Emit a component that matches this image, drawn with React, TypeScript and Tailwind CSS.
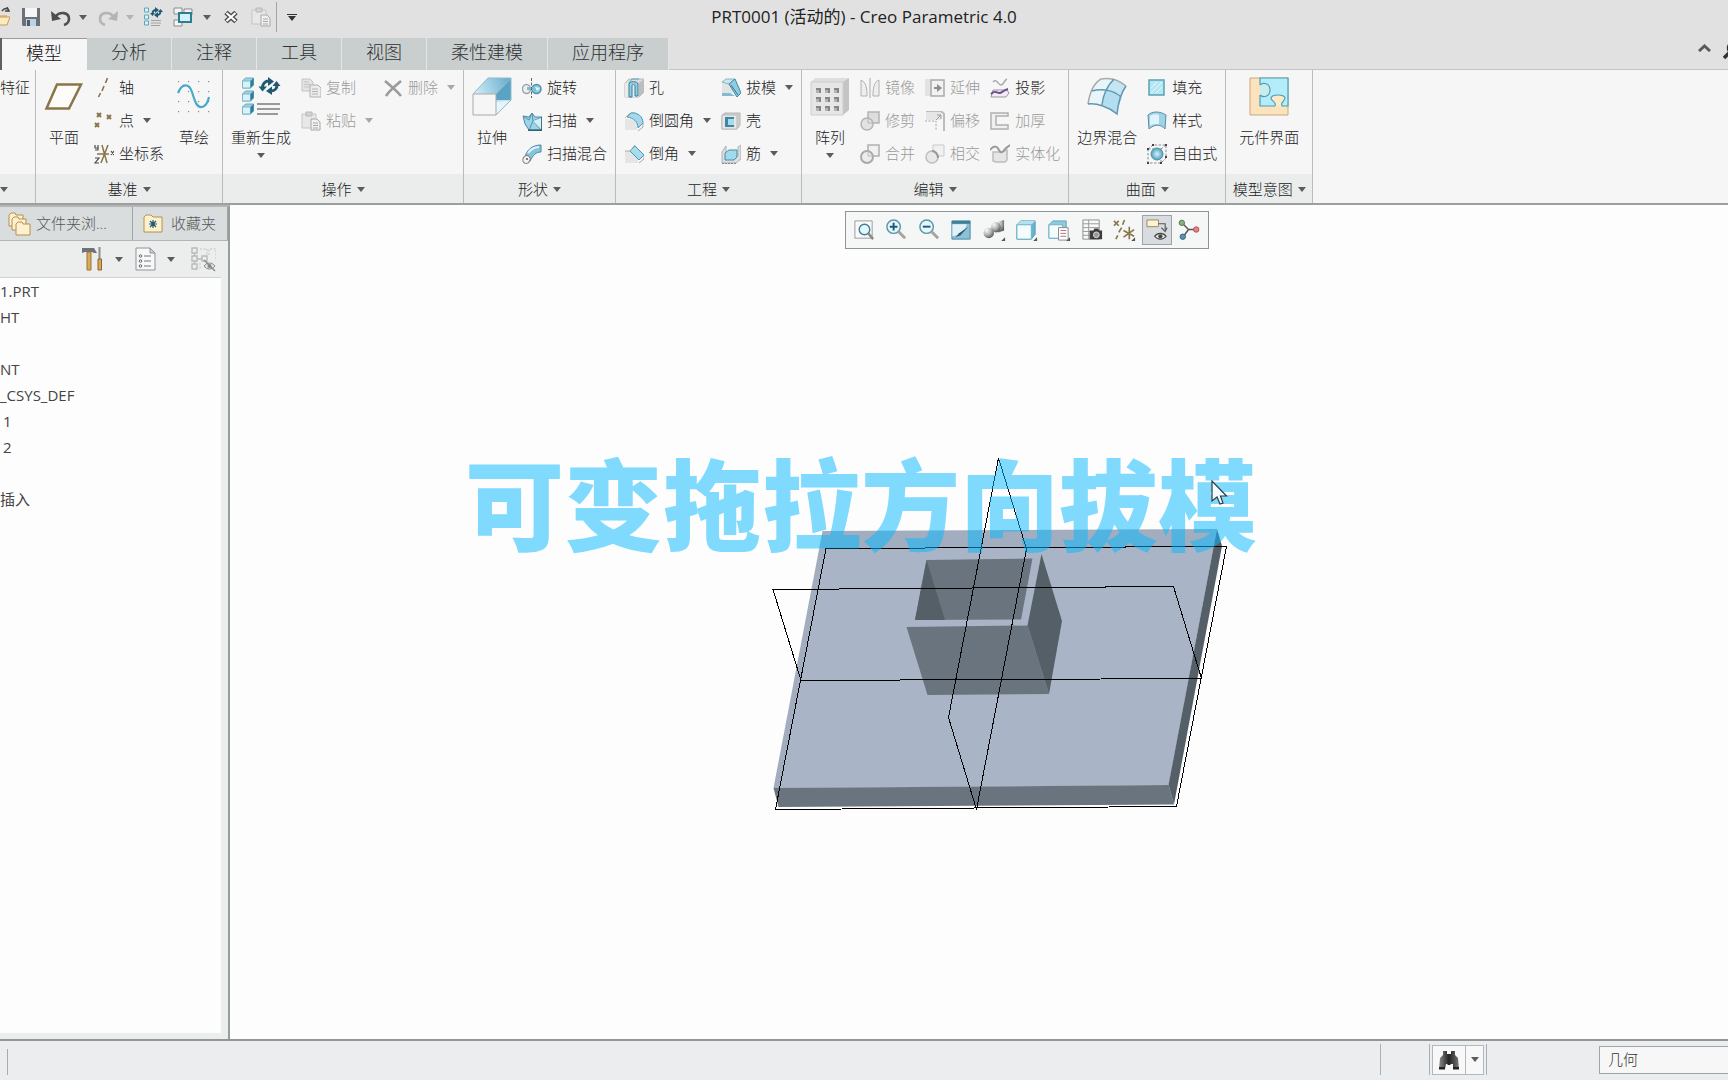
import type { ReactNode } from "react";

/* ---------- shared drawing helpers ---------- */

function Icon({ children, view = 20, className = "size-5" }: { children: ReactNode; view?: number; className?: string }) {
  return (
    <svg viewBox={`0 0 ${view} ${view}`} className={`${className} block shrink-0`} fill="none" aria-hidden="true">
      {children}
    </svg>
  );
}

function Caret({ tone = "fill-[#5c5c5c]" }: { tone?: string }) {
  return (
    <svg viewBox="0 0 8 5" className={`h-[5px] w-2 shrink-0 ${tone}`} aria-hidden="true">
      <path d="M0 0H8L4 5Z" />
    </svg>
  );
}

const TEAL = "#1f5a70";
const CYAN = "#4aa9c9";
const BROWN = "#8a7548";
const GREY = "#b9b9b9";

const cube = (x: number, y: number) => (
  <g key={`${x}-${y}`}>
    <path d={`M${x} ${y + 3}l3-3h8v7l-3 3h-8z`} fill="#9fd3e3" stroke="#6aa9bd" />
    <path d={`M${x} ${y + 3}h8v7h-8z`} fill="#d8f2f9" stroke="#7ab7c9" />
    <path d={`M${x + 8} ${y + 3}l3-3v7l-3 3z`} fill="#2e7f97" />
  </g>
);

/* ---------- large ribbon icons (40 units) ---------- */

const big: Record<string, ReactNode> = {
  plane: <path d="M13 7.500H37L25 31.500H2.500Z" stroke={BROWN} strokeWidth="2.500" fill="#fdfcf8" />,
  sketch: (
    <>
      {[4, 14, 24, 34].map((y) => [4, 14, 24, 34].map((x) => <rect key={`${x}-${y}`} x={x} y={y} width="1.200" height="1.200" fill="#8a8a8a" />))}
      <path d="M4 16C8 6 15 6 18 15C21 25 23 31 28 30C32 29 34 25 35 20" stroke={CYAN} strokeWidth="2.200" />
    </>
  ),
  regen: (
    <>
      {[1, 14, 27].map((y) => cube(1.5, y))}
      <path d="M16 27h23M16 32h23M16 37h21" stroke="#9a9a9a" strokeWidth="2" />
      <path d="M21.500 11C21.500 7 24 4 28 4" stroke={TEAL} strokeWidth="3" />
      <path d="M27 0L33 4.500L27 9Z" fill={TEAL} />
      <path d="M17.500 9.500H26L21.500 14.500Z" fill={TEAL} />
      <path d="M36 8C36 11 34 14 30 14" stroke={TEAL} strokeWidth="3" />
      <path d="M31 9.500L25 14L31 18Z" fill={TEAL} />
      <path d="M31.500 9H39.500L35.500 4Z" fill={TEAL} />
    </>
  ),
  extrude: (
    <>
      <path d="M1 17L16 1H39L24 17Z" fill="url(#exA)" />
      <path d="M39 1V23L24 38V17Z" fill="#bfe3f1" />
      <path d="M39 1V23H24V17Z" fill="#5ba3c4" />
      <path d="M24 38V25L37 24Z" fill="#e4f5fb" />
      <path d="M1 17H24V38H1Z" fill="#f6f6f6" stroke="#a9a9a9" />
      <path d="M1 17L16 1H39V23L24 38M24 17L39 1" stroke="#8fb9ca" />
      <defs>
        <linearGradient id="exA" x1="0" y1="17" x2="39" y2="0" gradientUnits="userSpaceOnUse">
          <stop stopColor="#d9f2fa" />
          <stop offset="1" stopColor="#5fa9ca" />
        </linearGradient>
      </defs>
    </>
  ),
  pattern: (
    <>
      <path d="M1 5L6 1H39V33L33 38H1Z" fill="#c4c4c4" />
      <path d="M1 5L6 1H39L33 5Z" fill="#dedede" />
      <path d="M1 5H33V38H1Z" fill="#e6e6e6" stroke="#cdcdcd" />
      {[11, 20, 29].map((y) =>
        [6, 15, 24].map((x) => (
          <g key={`${x}-${y}`}>
            <rect x={x} y={y} width="5" height="5" fill="#b3b3b3" />
            <path d={`M${x} ${y}h5v5h-2v-3h-3z`} fill="#858585" />
          </g>
        )),
      )}
    </>
  ),
  blend: (
    <>
      <path d="M1 27C3 14 7 6 14 2C24 0 32 3 39 9C34 16 31 27 30 37C22 30 10 26 1 27Z" fill="#e8f6fc" />
      <path d="M18 14C24 14 31 17 35 21C32 26 31 32 30 37C26 33 21 30 16 28C16 23 17 18 18 14Z" fill="#b3def2" />
      <path d="M27 2C32 3 36 6 39 9C37 12 35 16 34 20C30 17 25 14 19 14C21 9 24 5 27 2Z" fill="#c3e5f4" />
      <path d="M1 27C3 14 7 6 14 2C24 0 32 3 39 9" stroke="#aaa" strokeWidth="1.500" />
      <path d="M1 27C10 26 22 30 30 37C31 27 34 16 39 9M5 14C16 11 28 14 34 20M27 2C20 9 16 18 15 28" stroke="#5f98ae" strokeWidth="1.500" />
    </>
  ),
  puzzle: (
    <>
      <path d="M1 1H39V38H1Z" fill="#fbe3bd" stroke="#c9a878" />
      <path d="M11 1H39V29H11Z" fill="#b4ecfa" />
      <path d="M11 8C14 5 21 6 21 13C21 20 14 21 11 18" fill="#c9ecee" stroke="#4f9fb4" strokeWidth="1.200" />
      <path d="M26 29C28 25 22 24 22 21C23 17 35 17 36 21C36 24 31 25 33 29" fill="#fbe9c8" stroke="#4f9fb4" strokeWidth="1.200" />
      <path d="M11 8V1H39V29H33M26 29H11V18" stroke="#4f9fb4" strokeWidth="1.200" />
    </>
  ),
};

/* ---------- small ribbon icons (20 units) ---------- */

const sphere = (
  <radialGradient id="ball">
    <stop stopColor="#d9f3fb" />
    <stop offset="1" stopColor="#4f9fbb" />
  </radialGradient>
);

const small: Record<string, ReactNode> = {
  axis: <path d="M13.500 0L11.500 5M10 8L8 13M6.500 15L4.500 19" stroke={BROWN} strokeWidth="1.600" />,
  point: <path d="M3 2l4 4m0-4l-4 4M13 4l4 4m0-4l-4 4M1 12l4 4m0-4l-4 4" stroke={BROWN} strokeWidth="2" />,
  csys: (
    <>
      <path d="M8 1L13 19M14 1L7 19M3 10H15" stroke={BROWN} strokeWidth="1.500" />
      <path d="M1 1v3h3m0-3v5H1M17 7l3 4m0-4l-3 4M1 14h4l-4 5h4" stroke="#4a4a4a" strokeWidth="1.200" />
    </>
  ),
  copy: (
    <>
      <path d="M1 1h8l3 3v9H1z" fill="#e4e4e4" stroke="#c4c4c4" />
      <path d="M3 4h5M3 6.500h6M3 9h6" stroke="#c4c4c4" />
      <path d="M9 7h8l3 3v9H9z" fill="#ececec" stroke="#b0b0b0" />
      <path d="M11 11h6M11 13.500h6M11 16h6" stroke="#b4b4b4" />
    </>
  ),
  paste: (
    <>
      <path d="M1 3h14v14H1z" fill="#e8e8e8" stroke="#c6c6c6" />
      <path d="M5 1h6v4H5z" fill="#d3d3d3" stroke="#b8b8b8" />
      <path d="M10 8h6l3 3v8h-9z" fill="#f0f0f0" stroke="#a8a8a8" />
      <path d="M12 12h5M12 14.500h5M12 17h5" stroke="#a8a8a8" />
    </>
  ),
  remove: <path d="M2 3C8 8 14 13 18 18M18 3C12 8 6 13 3 18" stroke="#9b9b9b" strokeWidth="2.600" />,
  revolve: (
    <>
      <ellipse cx="4.500" cy="11" rx="4" ry="4.500" fill="#eee" stroke="#9ba9af" strokeWidth="1.500" />
      <ellipse cx="14.500" cy="11" rx="4.500" ry="4.500" fill="#8ccbe0" stroke="#4b92ab" strokeWidth="1.500" />
      <path d="M5 9l9 0v4l-9-1z" fill="#7dbdd3" />
      <path d="M13 9l5 1l-3 3z" fill="#e4f6fb" />
      <path d="M9.500 0v20" stroke="#666" strokeDasharray="3 1.500" />
    </>
  ),
  sweep: (
    <>
      <path d="M1 5l6 1l3-4l3 4h7v13H7L3 13z" fill="#9fd2e6" stroke="#4b8da5" />
      <path d="M1 5l6 4l3-7l1 8l9-4M7 19l4-9l8 9" stroke="#4f94ad" />
      <path d="M11 10l8-3v11z" fill="#d5eef7" />
      <path d="M6 19.300h14V6" stroke="#2c6277" strokeWidth="1.500" />
    </>
  ),
  sweepBlend: (
    <>
      <path d="M2 16C4 6 10 1 19 1v7c-5 0-8 3-11 9z" fill="#86c3dd" stroke="#4c8ba5" />
      <path d="M6 9c3-4 6-6 11-6" stroke="#dff4fb" strokeWidth="2" />
      <ellipse cx="4.500" cy="15.500" rx="3.500" ry="4" transform="rotate(25 4.500 15.500)" fill="#f3f3f3" stroke="#777" />
      <circle cx="5" cy="15" r="1" fill="#555" />
    </>
  ),
  hole: (
    <>
      <path d="M1 5l4-4h15v13l-5 5H1z" fill="#dcdcdc" stroke="#b9b9b9" />
      <path d="M1 5h14v14H1z" fill="#ebebeb" />
      <path d="M15 5l5-4v13l-5 5z" fill="#bdbdbd" />
      <path d="M5 19V6c0-3 9-3 9 0v12h-3V8c0-2-3-2-3 0v11z" fill="#8fd0e6" stroke="#347f98" />
      <path d="M5 5l3-4h7" stroke="#5aa6bf" />
    </>
  ),
  round: (
    <>
      <path d="M1 8h4c5 0 8 3 8 8v3H1z" fill="#e5e5e5" />
      <path d="M1 7L5 3C8 1 11 2 13 3" stroke="#bbb" />
      <path d="M7 2c7-1 12 4 12 10l-5 5C14 11 10 7 3 6z" fill="#a6d8ec" stroke="#4d9cb9" />
      <path d="M19 12v4l-5 4" stroke="#aaa" />
    </>
  ),
  chamfer: (
    <>
      <path d="M1 7h5l8 8v4H1z" fill="#e5e5e5" />
      <path d="M6 7l5-5l9 9l-5 5z" fill="#a6dcee" stroke="#4498b5" />
      <path d="M1 7h5l5-6M20 11v4l-5 4" stroke="#aaa" />
    </>
  ),
  draft: (
    <>
      <path d="M1 5l5-4h6v13l-5 4H1z" fill="#e3e3e3" />
      <path d="M1 4l4-3h9L8 6z" fill="#c9e7f1" stroke="#8bb" />
      <path d="M8 6l6-5l6 14l-4 4z" fill="#8fcce2" stroke="#3d8aa5" />
      <path d="M1 15h8l5 3H1z" fill="#7fbdd3" />
      <path d="M10 7l7 10" stroke="#2f7c97" />
    </>
  ),
  shell: (
    <>
      <path d="M1 4l3-2h15v12l-3 4H1z" fill="#cfcfcf" stroke="#b5b5b5" />
      <path d="M1 4h15v14H1z" fill="#e6e6e6" stroke="#bcbcbc" />
      <path d="M4 6h9v10H4z" fill="#3f88a2" />
      <path d="M7 8h6v6H7z" fill="#a8dced" />
    </>
  ),
  rib: (
    <>
      <path d="M1 8l4-6v10h12v-9l3-2v14l-5 4H1z" fill="#dedede" stroke="#a9b4b8" />
      <path d="M4 9l4-3h8v7l-3 3H4z" fill="#a4d9eb" stroke="#3e91ad" />
      <path d="M1 19.500h14" stroke="#888" strokeDasharray="2 1" />
    </>
  ),
  mirror: (
    <>
      <path d="M1 2c5 2 6 8 6 16H1zM19 2c-5 2-6 8-6 16h6z" fill="#eee" stroke="#b2b2b2" />
      <path d="M10 0v20" stroke="#aaa" />
    </>
  ),
  trim: (
    <>
      <path d="M8 1h11v11H8z" fill="#ddd" stroke="#b4b4b4" strokeWidth="1.500" />
      <circle cx="7" cy="13" r="6" fill="#e2e2e2" stroke="#b4b4b4" strokeWidth="1.500" />
      <path d="M8 7v5h5" stroke="#b4b4b4" />
    </>
  ),
  merge: (
    <>
      <path d="M8 1h11v11H8z" fill="#f1f1f1" stroke="#b0b0b0" strokeWidth="1.500" />
      <circle cx="7" cy="13" r="6" fill="#ececec" stroke="#a9a9a9" strokeWidth="2" />
      <path d="M8 7v5h5" stroke="#bbb" />
    </>
  ),
  extend: (
    <>
      <path d="M0 1h6v17H0z" fill="#e2e2e2" />
      <path d="M6 2h13v16H6z" fill="#f1f1f1" stroke="#ababab" strokeWidth="1.500" />
      <path d="M9 10h4" stroke="#8d8d8d" strokeWidth="2" />
      <path d="M12 6l5 4l-5 4z" fill="#8d8d8d" />
    </>
  ),
  offset: (
    <>
      <path d="M1 1h16l2 2v17" stroke="#bcbcbc" strokeWidth="2" />
      <path d="M1 1h15v8H1z" fill="#e6e6e6" />
      <path d="M0 10h11v10" stroke="#a4a4a4" strokeDasharray="2 1.500" />
      <path d="M11 9l5-5m-4 0h4v4" stroke="#999" />
    </>
  ),
  intersect: (
    <>
      <path d="M8 1h11v11H8z" fill="#f1f1f1" stroke="#c9c9c9" />
      <circle cx="7" cy="13" r="6" fill="#e9e9e9" stroke="#bdbdbd" strokeWidth="1.500" />
      <path d="M7 7c3 0 6 3 6 7" stroke="#999" strokeWidth="2" />
    </>
  ),
  project: (
    <>
      <path d="M3 4c4-4 5 3 8 3s3-5 6-6" stroke="#a9a9a9" strokeWidth="1.500" />
      <path d="M3 12h14l2 3l-3 4H1z" fill="#f1ebf5" stroke="#999" />
      <path d="M1 16c5-5 6 0 9-1s4-3 8-4" stroke="#6e4a8f" strokeWidth="2" />
    </>
  ),
  thicken: <path d="M1 2h17v3H6v9h12v4H1z" fill="#f0f0f0" stroke="#b0b0b0" strokeWidth="1.500" />,
  solidify: (
    <>
      <path d="M3 8v9l3 1h9l2-2V6c-3 1-4 2-6 2z" fill="#e6e6e6" stroke="#bdbdbd" strokeWidth="1.500" />
      <path d="M0 6C4 1 7 2 9 6s4 2 6-1l5-4" stroke="#999" strokeWidth="2" />
    </>
  ),
  fill: (
    <>
      <path d="M2 2h15v15H2z" fill="#b6e6f2" stroke="#5ba3b5" strokeWidth="1.500" />
      <path d="M4 10l6-6M4 15L15 4M9 15l6-6" stroke="#e2f6fb" />
    </>
  ),
  style: (
    <>
      <path d="M1 4c4-4 12-4 18 0l-1 14c-4-5-11-5-16 0z" fill="#9fd2e8" stroke="#5b8fa3" />
      <path d="M3 5c3-2 7-2 9-1v9c-3 0-7 0-9 2z" fill="#dff3fb" />
    </>
  ),
  freestyle: (
    <>
      <defs>{sphere}</defs>
      <path d="M1 5l5-4h13v13l-5 5H1zM1 5h13v14M14 5l5-4" stroke="#8d8d8d" strokeDasharray="2.500 1.500" />
      <circle cx="10" cy="10" r="6" fill="url(#ball)" stroke="#4a93ad" />
      <path d="M0 4h2v2H0zM5 0h2v2H5zM18 0h2v2h-2zM0 18h2v2H0zM13 18h2v2h-2zM18 12h2v2h-2z" fill="#444" />
    </>
  ),
};

/* ---------- ribbon building blocks ---------- */

function SmallButton({ icon, label, off = false, menu = false }: { icon: string; label: string; off?: boolean; menu?: boolean }) {
  return (
    <button
      type="button"
      disabled={off}
      className={`flex h-[33px] items-center whitespace-nowrap ${off ? "text-[#9a9a9a]" : "text-[#222]"}`}
    >
      <Icon>{small[icon]}</Icon>
      <span className="ml-[5px]">{label}</span>
      {menu && (
        <span className="ml-[9px]">
          <Caret tone={off ? "fill-[#a8a8a8]" : "fill-[#5c5c5c]"} />
        </span>
      )}
    </button>
  );
}

function BigButton({ icon, label, wide = false, menu = false }: { icon: string; label: string; wide?: boolean; menu?: boolean }) {
  return (
    <button type="button" className={`flex flex-col items-center self-start whitespace-nowrap pt-1.5 ${wide ? "w-19" : "w-14"}`}>
      <Icon view={40} className="size-10">
        {big[icon]}
      </Icon>
      <span className="mt-2.5 leading-5">{label}</span>
      {menu && (
        <span className="mt-1.5">
          <Caret />
        </span>
      )}
    </button>
  );
}

function Column({ children, tight = false }: { children: ReactNode; tight?: boolean }) {
  return <div className={`flex flex-col items-start ${tight ? "ml-0.5" : "ml-2.5"}`}>{children}</div>;
}

function Group({ title, children, className = "pr-2" }: { title: string; children: ReactNode; className?: string }) {
  return (
    <section className="flex shrink-0 flex-col border-r border-[#b9bcbd]" aria-label={title}>
      <div className={`flex h-[104px] pt-px ${className}`}>{children}</div>
      <button type="button" className="flex h-[29px] items-center justify-center gap-[5px] whitespace-nowrap bg-[#ebeded] pt-px">
        <span>{title}</span>
        <Caret />
      </button>
    </section>
  );
}

function Ribbon() {
  return (
    <div className="flex overflow-hidden border-b-2 border-[#9c9fa0] bg-[#f6f6f6] text-[15px] font-light text-[#222]">
      <section className="flex w-9 shrink-0 flex-col overflow-hidden border-r border-[#b9bcbd]" aria-label="特征">
        <div className="flex h-[104px] items-start justify-end pt-px pr-[5px]">
          <button type="button" className="flex h-[33px] items-center whitespace-nowrap">
            特征
          </button>
        </div>
        <button type="button" aria-label="更多" className="flex h-[29px] items-center bg-[#ebeded] pt-px">
          <Caret />
        </button>
      </section>

      <Group title="基准" className="">
        <BigButton icon="plane" label="平面" />
        <Column tight>
          <SmallButton icon="axis" label="轴" />
          <SmallButton icon="point" label="点" menu />
          <SmallButton icon="csys" label="坐标系" />
        </Column>
        <div className="ml-0.5 flex">
          <BigButton icon="sketch" label="草绘" />
        </div>
      </Group>

      <Group title="操作">
        <BigButton icon="regen" label="重新生成" wide menu />
        <Column tight>
          <SmallButton icon="copy" label="复制" off />
          <SmallButton icon="paste" label="粘贴" off menu />
        </Column>
        <Column>
          <SmallButton icon="remove" label="删除" off menu />
        </Column>
      </Group>

      <Group title="形状">
        <BigButton icon="extrude" label="拉伸" />
        <Column tight>
          <SmallButton icon="revolve" label="旋转" />
          <SmallButton icon="sweep" label="扫描" menu />
          <SmallButton icon="sweepBlend" label="扫描混合" />
        </Column>
      </Group>

      <Group title="工程" className="px-2">
        <div className="flex flex-col items-start">
          <SmallButton icon="hole" label="孔" />
          <SmallButton icon="round" label="倒圆角" menu />
          <SmallButton icon="chamfer" label="倒角" menu />
        </div>
        <Column>
          <SmallButton icon="draft" label="拔模" menu />
          <SmallButton icon="shell" label="壳" />
          <SmallButton icon="rib" label="筋" menu />
        </Column>
      </Group>

      <Group title="编辑">
        <BigButton icon="pattern" label="阵列" menu />
        <Column tight>
          <SmallButton icon="mirror" label="镜像" off />
          <SmallButton icon="trim" label="修剪" off />
          <SmallButton icon="merge" label="合并" off />
        </Column>
        <Column>
          <SmallButton icon="extend" label="延伸" off />
          <SmallButton icon="offset" label="偏移" off />
          <SmallButton icon="intersect" label="相交" off />
        </Column>
        <Column>
          <SmallButton icon="project" label="投影" />
          <SmallButton icon="thicken" label="加厚" off />
          <SmallButton icon="solidify" label="实体化" off />
        </Column>
      </Group>

      <Group title="曲面">
        <BigButton icon="blend" label="边界混合" wide />
        <Column tight>
          <SmallButton icon="fill" label="填充" />
          <SmallButton icon="style" label="样式" />
          <SmallButton icon="freestyle" label="自由式" />
        </Column>
      </Group>

      <Group title="模型意图" className="justify-center px-[5px]">
        <BigButton icon="puzzle" label="元件界面" wide />
      </Group>
    </div>
  );
}

/* ---------- title bar ---------- */

function ToolButton({ label, children, className = "" }: { label: string; children: ReactNode; className?: string }) {
  return (
    <button type="button" aria-label={label} title={label} className={`flex shrink-0 items-center ${className}`}>
      {children}
    </button>
  );
}

function TitleBar() {
  return (
    <header className="grid h-[38px] grid-cols-[1fr_auto_1fr] items-center">
      <div className="flex items-center pb-1">
        <ToolButton label="打开" className="w-2.5 justify-end overflow-hidden">
          <Icon>
            <path d="M2 6h6l2 2h7v10H2z" fill="#e3c07a" />
            <path d="M5 10h15l-3 8H2z" fill="#fbe9c0" stroke="#c89d52" />
            <path d="M12 4c2-3 4-3 6-2m-1-2l2 4l-4 0" stroke="#444" strokeWidth="1.500" />
          </Icon>
        </ToolButton>
        <ToolButton label="保存" className="ml-[11px]">
          <Icon>
            <path d="M1 1h18v18H2l-1-1z" fill="#6c7177" />
            <path d="M4 1h12v9H4z" fill="#f3f5f6" />
            <path d="M5 12h10v7H5z" fill="#b9d3e8" />
            <path d="M6 13h3v6H6z" fill="#525a62" />
          </Icon>
        </ToolButton>
        <ToolButton label="撤消" className="ml-2.5">
          <Icon>
            <path d="M4 10C9 4 18 5 18 12c0 3-2 5-5 6" stroke="#4a4f52" strokeWidth="2.600" />
            <path d="M0 4l1 10l9-2z" fill="#4a4f52" />
          </Icon>
        </ToolButton>
        <ToolButton label="撤消列表" className="ml-2">
          <Caret />
        </ToolButton>
        <ToolButton label="重做" className="ml-[11px]">
          <Icon>
            <path d="M16 10C11 4 2 5 2 12c0 3 2 5 5 6" stroke="#b4b4b4" strokeWidth="2.600" />
            <path d="M20 4l-1 10l-9-2z" fill="#b4b4b4" />
          </Icon>
        </ToolButton>
        <ToolButton label="重做列表" className="ml-2">
          <Caret tone="fill-[#b4b4b4]" />
        </ToolButton>
        <ToolButton label="重新生成" className="ml-[9px]">
          <Icon>
            {[1, 8, 14].map((y) => (
              <path key={y} d={`M1.500 ${y}h4v4h-4z`} fill="#d8f2f9" stroke="#62a5b9" />
            ))}
            <path d="M8 13.500h10M8 16h10M8 18.500h9" stroke="#a2a2a2" />
            <path d="M9.500 7c0-3 1-4 3.500-4M17.500 4c0 3-1 4-3.500 4" stroke={TEAL} strokeWidth="1.800" />
            <path d="M12 0l4 3l-4 3zM15 5l-4 3l4 3zM7 6h5l-2.500 3zM15 5h5l-2.500-3z" fill={TEAL} />
          </Icon>
        </ToolButton>
        <ToolButton label="窗口" className="ml-2.5">
          <Icon>
            <path d="M1 1h8v6H1zM11 2h8v6h-8zM1 13h8v6H1z" fill="#f4f4f4" stroke="#8b8b8b" />
            <path d="M6 6h12v9H6z" fill="#d4f0f8" stroke="#2e7b94" strokeWidth="2" />
          </Icon>
        </ToolButton>
        <ToolButton label="窗口列表" className="ml-2.5">
          <Caret />
        </ToolButton>
        <ToolButton label="关闭" className="ml-3">
          <Icon view={16} className="size-4">
            <path d="M3 3.500l10 9M13 3.500l-10 9" stroke="#4a4a4a" strokeWidth="5" />
            <path d="M3.500 4l9 8M12.500 4l-9 8" stroke="#fff" strokeWidth="2.200" />
          </Icon>
        </ToolButton>
        <ToolButton label="粘贴" className="ml-3">
          <Icon>{small.paste}</Icon>
        </ToolButton>
        <span className="ml-[5px] h-[30px] w-px bg-[#a3a3a3]" />
        <ToolButton label="自定义快速访问工具栏" className="ml-2.5 flex-col gap-px">
          <span className="h-px w-2.5 bg-[#333]" />
          <Caret tone="fill-[#333]" />
        </ToolButton>
      </div>
      <h1 className="whitespace-nowrap pb-1 text-[17px] leading-6 text-[#222]">PRT0001 (活动的) - Creo Parametric 4.0</h1>
      <span />
    </header>
  );
}

const tabs = ["模型", "分析", "注释", "工具", "视图", "柔性建模", "应用程序"];

function TabStrip() {
  return (
    <div className="flex h-8 items-stretch justify-between border-b border-[#c3c6c7]">
      <nav className="-mb-px flex border-l-2 border-[#5d6163]" role="tablist">
        {tabs.map((t, i) => (
          <button
            key={t}
            type="button"
            role="tab"
            aria-selected={i === 0}
            className={
              i === 0
                ? "w-[85px] border-t border-[#9a9d9e] bg-[#f6f6f6] pr-px pb-1 text-[18px] leading-6 font-light text-[#111]"
                : "border-r border-[#e4e6e6] bg-[#c9cece] px-6 pb-1 text-[18px] leading-6 font-light text-[#2f3133]"
            }
          >
            {t}
          </button>
        ))}
      </nav>
      <div className="flex items-center gap-3 overflow-hidden pb-3">
        <button type="button" aria-label="最小化功能区">
          <svg viewBox="0 0 13 8" className="h-2 w-[13px]" fill="none">
            <path d="M1 7L6.500 2L12 7" stroke="#5a5a5a" strokeWidth="3" />
          </svg>
        </button>
        <button type="button" aria-label="搜索" className="flex w-[5px] overflow-hidden pt-2">
          <Icon>
            <circle cx="11" cy="6" r="6" stroke="#333" strokeWidth="2.500" />
            <path d="M6 11l-5 5" stroke="#333" strokeWidth="3.500" />
          </Icon>
        </button>
      </div>
    </div>
  );
}

/* ---------- navigator ---------- */

const folder = (x: number, y: number) => (
  <path key={x} d={`M${x} ${y + 2}l2-2h4l1 2h7v11h-14z`} fill="#fdf0cf" stroke="#b5904f" />
);

const tree = [
  { text: "1.PRT" },
  { text: "HT" },
  { text: "" },
  { text: "NT" },
  { text: "_CSYS_DEF" },
  { text: "1", inset: true },
  { text: "2", inset: true },
  { text: "" },
  { text: "插入" },
];

function Navigator() {
  return (
    <aside className="flex w-[230px] shrink-0 flex-col border-t-2 border-r-2 border-t-[#b3b6b7] border-r-[#999c9d] bg-[#eceeee]">
      <div className="flex h-[34px] border-b border-[#b0b5b6] bg-[#d9dddd] text-[15px] font-light text-[#55575a]" role="tablist">
        <button type="button" role="tab" className="flex w-[133px] items-center gap-1 border-r border-[#9fa4a5] pl-2 whitespace-nowrap">
          <Icon view={24} className="size-6">
            {folder(1, 1)}
            {folder(4, 5)}
            {folder(8, 10)}
          </Icon>
          文件夹浏...
        </button>
        <button type="button" role="tab" className="flex flex-1 items-center gap-2 border-r border-[#9fa4a5] pl-2.5 whitespace-nowrap">
          <Icon>
            <path d="M1 3l2-2h5l2 2h9v15H1z" fill="#fdf0cf" stroke="#b5904f" />
            <path d="M10 6v8M6 10h8M7 7l6 6M13 7l-6 6" stroke="#1f5a70" strokeWidth="1.200" />
          </Icon>
          收藏夹
        </button>
      </div>
      <div className="flex h-9 items-center pl-[81px]">
        <ToolButton label="设置">
          <Icon view={24} className="size-6">
            <path d="M1 1h12l3 5h-3l-2-1H4L1 6z" fill="#6e7379" />
            <path d="M6 5h4v18H6z" fill="#d9a95c" stroke="#9c7433" />
            <path d="M17.500 0h2v12h-2z" fill="#8a8f94" />
            <path d="M17 12h3.500v11H17z" fill="#d9a95c" stroke="#8b662b" />
          </Icon>
        </ToolButton>
        <ToolButton label="设置列表" className="ml-2.5">
          <Caret />
        </ToolButton>
        <ToolButton label="显示" className="ml-2.5">
          <Icon view={24} className="size-6">
            <path d="M3 1h14l5 5v17H3z" fill="#f7f8f9" stroke="#8d9499" />
            <path d="M17 1v5h5z" fill="#ccd2d6" stroke="#8d9499" />
            <path d="M11 9h7M11 14h7M11 19h7" stroke="#777" strokeWidth="1.200" />
            <circle cx="7.500" cy="9" r="1.300" stroke="#666" />
            <circle cx="7.500" cy="14" r="1.300" stroke="#666" />
            <circle cx="7.500" cy="19" r="1.300" stroke="#666" />
          </Icon>
        </ToolButton>
        <ToolButton label="显示列表" className="ml-2.5">
          <Caret />
        </ToolButton>
        <ToolButton label="隐藏" className="ml-4">
          <Icon view={25} className="size-[25px]">
            <path d="M1 1h5v5H1zM1 9h5v5H1zM1 17h5v5H1zM3.500 6v3M3.500 14v3M6 12h5M11 9h5v5h-5z" stroke={GREY} strokeWidth="1.400" />
            <path d="M9 2h7v6M18 8V2h7v12M9 16v7" stroke="#c2c2c2" strokeDasharray="2 1.500" />
            <path d="M13 19c3-4 8-4 11 0c-3 4-8 4-11 0z" fill="#e2e2e2" stroke="#888" />
            <circle cx="18.500" cy="19" r="2" fill="#888" />
            <path d="M13 13l11 11" stroke="#888" strokeWidth="1.400" />
          </Icon>
        </ToolButton>
      </div>
      <ul className="mr-[7px] mb-1.5 flex-1 overflow-hidden border-t border-[#cfd3d4] bg-[#fdfdfd] text-[15px] leading-[26px] text-[#444]">
        {tree.map((r, i) => (
          <li key={i} className={`h-[26px] whitespace-nowrap ${r.inset ? "pl-[3px]" : ""}`}>
            {r.text}
          </li>
        ))}
      </ul>
    </aside>
  );
}

/* ---------- graphics area ---------- */

const corner = <path d="M23 19v4h-4z" fill="#555" />;

const views: { label: string; art: ReactNode }[] = [
  {
    label: "重新调整",
    art: (
      <>
        <path d="M2 2h18v18H2z" fill="#fafafa" stroke="#9a9a9a" />
        <circle cx="12" cy="11" r="5.500" fill="#e6f6fb" stroke="#3b8199" strokeWidth="1.500" />
        <path d="M16 15l5 6" stroke="#8e8a84" strokeWidth="2.500" />
      </>
    ),
  },
  {
    label: "放大",
    art: (
      <>
        <circle cx="9" cy="8" r="7" fill="#e6f6fb" stroke="#5b97ab" strokeWidth="1.500" />
        <path d="M5 8h8M9 4v8" stroke="#1d5b75" strokeWidth="2" />
        <path d="M14 13l7 7" stroke="#a8a29a" strokeWidth="3" />
      </>
    ),
  },
  {
    label: "缩小",
    art: (
      <>
        <circle cx="9" cy="8" r="7" fill="#e6f6fb" stroke="#5b97ab" strokeWidth="1.500" />
        <path d="M5 8h8" stroke="#1d5b75" strokeWidth="2" />
        <path d="M14 13l7 7" stroke="#a8a29a" strokeWidth="3" />
      </>
    ),
  },
  {
    label: "重画",
    art: (
      <>
        <path d="M2 2h19v19H2z" fill="#8cc0d4" stroke="#4b8aa1" />
        <path d="M2 2h19v3H2z" fill="#3f7f98" />
        <path d="M2.500 5.500h15C16 13 10 17 2.500 18z" fill="#e3f2f8" />
        <path d="M19 8l-8 9l-5 2l3-4z" fill="#2b5c70" />
      </>
    ),
  },
  {
    label: "着色",
    art: (
      <>
        <defs>
          <radialGradient id="shade" cx=".3" cy=".25" r=".85">
            <stop stopColor="#fafafa" />
            <stop offset=".5" stopColor="#b5b5b5" />
            <stop offset="1" stopColor="#4f4f4f" />
          </radialGradient>
        </defs>
        <path d="M12 4L22 1V12L16 14Z" fill="url(#shade)" />
        <ellipse cx="13.500" cy="8.500" rx="5" ry="5.500" fill="url(#shade)" />
        <ellipse cx="6" cy="14.500" rx="5.500" ry="5.500" fill="url(#shade)" />
        {corner}
      </>
    ),
  },
  {
    label: "显示样式",
    art: (
      <>
        <path d="M2 6l4-4h15v14l-4 5H2z" fill="#68b4cf" stroke="#4c9bb7" />
        <path d="M2 6l4-4h15l-4 4z" fill="#b6e2f0" />
        <path d="M2 6h15v15H2z" fill="#f4fcfe" stroke="#6fb2c8" />
        {corner}
      </>
    ),
  },
  {
    label: "已保存方向",
    art: (
      <>
        <path d="M1 6l4-4h14v14l-3 4H1z" fill="#8ec9dc" stroke="#5ea7bf" />
        <path d="M1 6h14v14H1z" fill="#f4fcfe" stroke="#6fb2c8" />
        <path d="M11 9h10v13H11z" fill="#fff" stroke="#888" />
        <path d="M13 12h6M13 15h6M13 18h6" stroke="#a77" />
        {corner}
      </>
    ),
  },
  {
    label: "视图管理器",
    art: (
      <>
        <path d="M2 1h17v20H2z" fill="#f8f8f8" stroke="#8d8d8d" />
        <path d="M2 5h17M2 9h17M2 13h8M2 17h8M8 1v20" stroke="#999" />
        <path d="M9 12h4l1-2h4l1 2h3v9H9z" fill="#3c3c3c" />
        <circle cx="16" cy="16.500" r="3" fill="#999" stroke="#ddd" />
      </>
    ),
  },
  {
    label: "基准显示过滤器",
    art: (
      <>
        <path d="M1 2l5 5m0-5l-5 5M12 1l-2 5M9 9l-3 5M5 17l-2 4M17 8v13M11 12l11 6M22 11l-11 8" stroke={BROWN} strokeWidth="1.700" />
        {corner}
      </>
    ),
  },
  {
    label: "注释显示",
    art: (
      <>
        <path d="M1 1h12v7H1z" fill="#fdf4cd" stroke="#8f8a6f" />
        <path d="M13 5h7v6m-4-2l4 4l2-4" stroke="#555" strokeWidth="1.200" />
        <path d="M9 18c3-4 9-4 12 0c-3 4-9 4-12 0z" fill="#e8e8e8" stroke="#444" strokeWidth="1.300" />
        <circle cx="15" cy="18" r="2.200" fill="#444" />
      </>
    ),
  },
  {
    label: "旋转中心",
    art: (
      <>
        <path d="M4 4l7 7l-6 8M11 11h8" stroke="#555" strokeWidth="1.500" />
        <circle cx="4" cy="4" r="2.800" fill="#86b186" stroke="#4f7a52" />
        <circle cx="19" cy="11" r="2.800" fill="#e08585" stroke="#b34d4d" />
        <circle cx="5" cy="18.500" r="2.800" fill="#5c93ad" stroke="#2f647d" />
      </>
    ),
  },
];

function ViewToolbar() {
  return (
    <div className="absolute top-1.5 left-[615px] grid w-[364px] grid-cols-11 border border-[#8f9394] bg-[#f5f6f6] px-0.5 py-[3px]" role="toolbar">
      {views.map((v) => {
        const on = v.label === "注释显示";
        return (
          <button
            key={v.label}
            type="button"
            aria-label={v.label}
            aria-pressed={on}
            className={`flex h-[30px] items-center justify-center border ${on ? "mx-px border-[#9ea3a7] bg-[#d8dbdf]" : "border-transparent"}`}
          >
            <Icon view={24} className="size-[23px]">
              {v.art}
            </Icon>
          </button>
        );
      })}
    </div>
  );
}

function Model() {
  return (
    <svg viewBox="760 450 480 370" className="absolute top-[245px] left-[530px] h-[370px] w-[480px]" fill="none" aria-hidden="true">
      <path d="M822.500 531L1217 529L1168.500 785L773.500 788Z" fill="#a2aebf" />
      <path d="M826 548L1213 546.500L1168.500 785L779 788Z" fill="#a9b5c6" />
      <path d="M773.500 788L1168.500 785L1174 804.500L778.500 807Z" fill="#6a747f" />
      <path d="M1217 529L1222 546L1174 804.500L1168.500 785Z" fill="#555f68" />
      <path d="M926.500 560L1032.500 558.500L1021 619.500L915 620Z" fill="#6a747f" />
      <path d="M926.500 560L945 620H915Z" fill="#555f68" />
      <path d="M906.500 627L1027.500 625.500L1049 694L927.500 695Z" fill="#6a747f" />
      <path d="M1041.500 554L1062 621L1049 694L1027.500 625.500Z" fill="#555f68" />
      <g stroke="#000" shapeRendering="crispEdges">
        <path d="M826 548.500L1226.500 546.500L1176.500 806.500L775.500 809.500Z" />
        <path d="M773 589.500L1173.500 586.500L1201.500 678.500L801 680.500Z" />
        <path d="M998.500 458L1026.500 549L976.500 809.500L948.500 717.500Z" />
      </g>
    </svg>
  );
}

function GraphicsArea() {
  return (
    <main className="relative min-w-0 flex-1 overflow-hidden bg-[#fdfdfd]">
      <Model />
      <p className="absolute top-[238px] left-[235px] whitespace-nowrap text-[99px] leading-[124px] font-black text-[#00b7ff]/50">
        可变拖拉方向拔模
      </p>
      <svg viewBox="0 0 17 26" className="absolute top-[275px] left-[981px] h-[26px] w-[17px]" aria-hidden="true">
        <path d="M1 1V21L6 17L9 24L12 23L9.500 16H15.500Z" fill="#f2fbff" stroke="#2b3d48" strokeWidth="1.200" />
      </svg>
      <ViewToolbar />
    </main>
  );
}

/* ---------- status bar ---------- */

function StatusBar() {
  return (
    <footer className="flex h-[41px] shrink-0 items-start justify-between border-t-2 border-[#939697] bg-[#ecedef] text-[15px] text-[#333]">
      <span className="mt-2 ml-[7px] h-[26px] w-px bg-[#a9acae]" />
      <div className="flex items-center pt-[3px]">
        <span className="h-[31px] w-px bg-[#a9b0b5]" />
        <span className="ml-12 h-[31px] w-px bg-[#a9b0b5]" />
        <div className="ml-0.5 flex h-[30px] border border-[#b3b8bc] bg-[#f8f8f8]">
          <button type="button" aria-label="查找" className="flex w-[33px] items-center justify-center border-r border-[#b3b8bc]">
            <Icon>
              <defs>
                <linearGradient id="bino" x1="0" y1="0" x2="1" y2="0">
                  <stop stopColor="#8b8b8b" />
                  <stop offset=".5" stopColor="#222" />
                  <stop offset="1" stopColor="#777" />
                </linearGradient>
              </defs>
              <path d="M4 1h4v3h4V1h4v4l3 3l1 11h-6v-5h-2l-1 1H9l-1-1H7l-1 5H0L1 8l3-3z" fill="url(#bino)" />
              <path d="M0 17h6v2.500H0zM14 17h6v2.500h-6z" fill="#222" />
            </Icon>
          </button>
          <button type="button" aria-label="查找选项" className="flex w-[17px] items-center justify-center">
            <Caret />
          </button>
        </div>
        <span className="ml-0.5 h-[31px] w-px bg-[#a9b0b5]" />
        <select aria-label="选择过滤器" className="ml-28 h-7 w-[129px] appearance-none border border-r-0 border-[#9fa4a7] bg-[#f7f7f7] pl-2 font-light">
          <option>几何</option>
        </select>
      </div>
    </footer>
  );
}

export default function App() {
  return (
    <div className='flex h-screen flex-col overflow-hidden bg-[#e1e1e1] font-["Open_Sans","Noto_Sans_CJK_SC",sans-serif]'>
      <TitleBar />
      <TabStrip />
      <Ribbon />
      <div className="flex min-h-0 flex-1">
        <Navigator />
        <GraphicsArea />
      </div>
      <StatusBar />
    </div>
  );
}
